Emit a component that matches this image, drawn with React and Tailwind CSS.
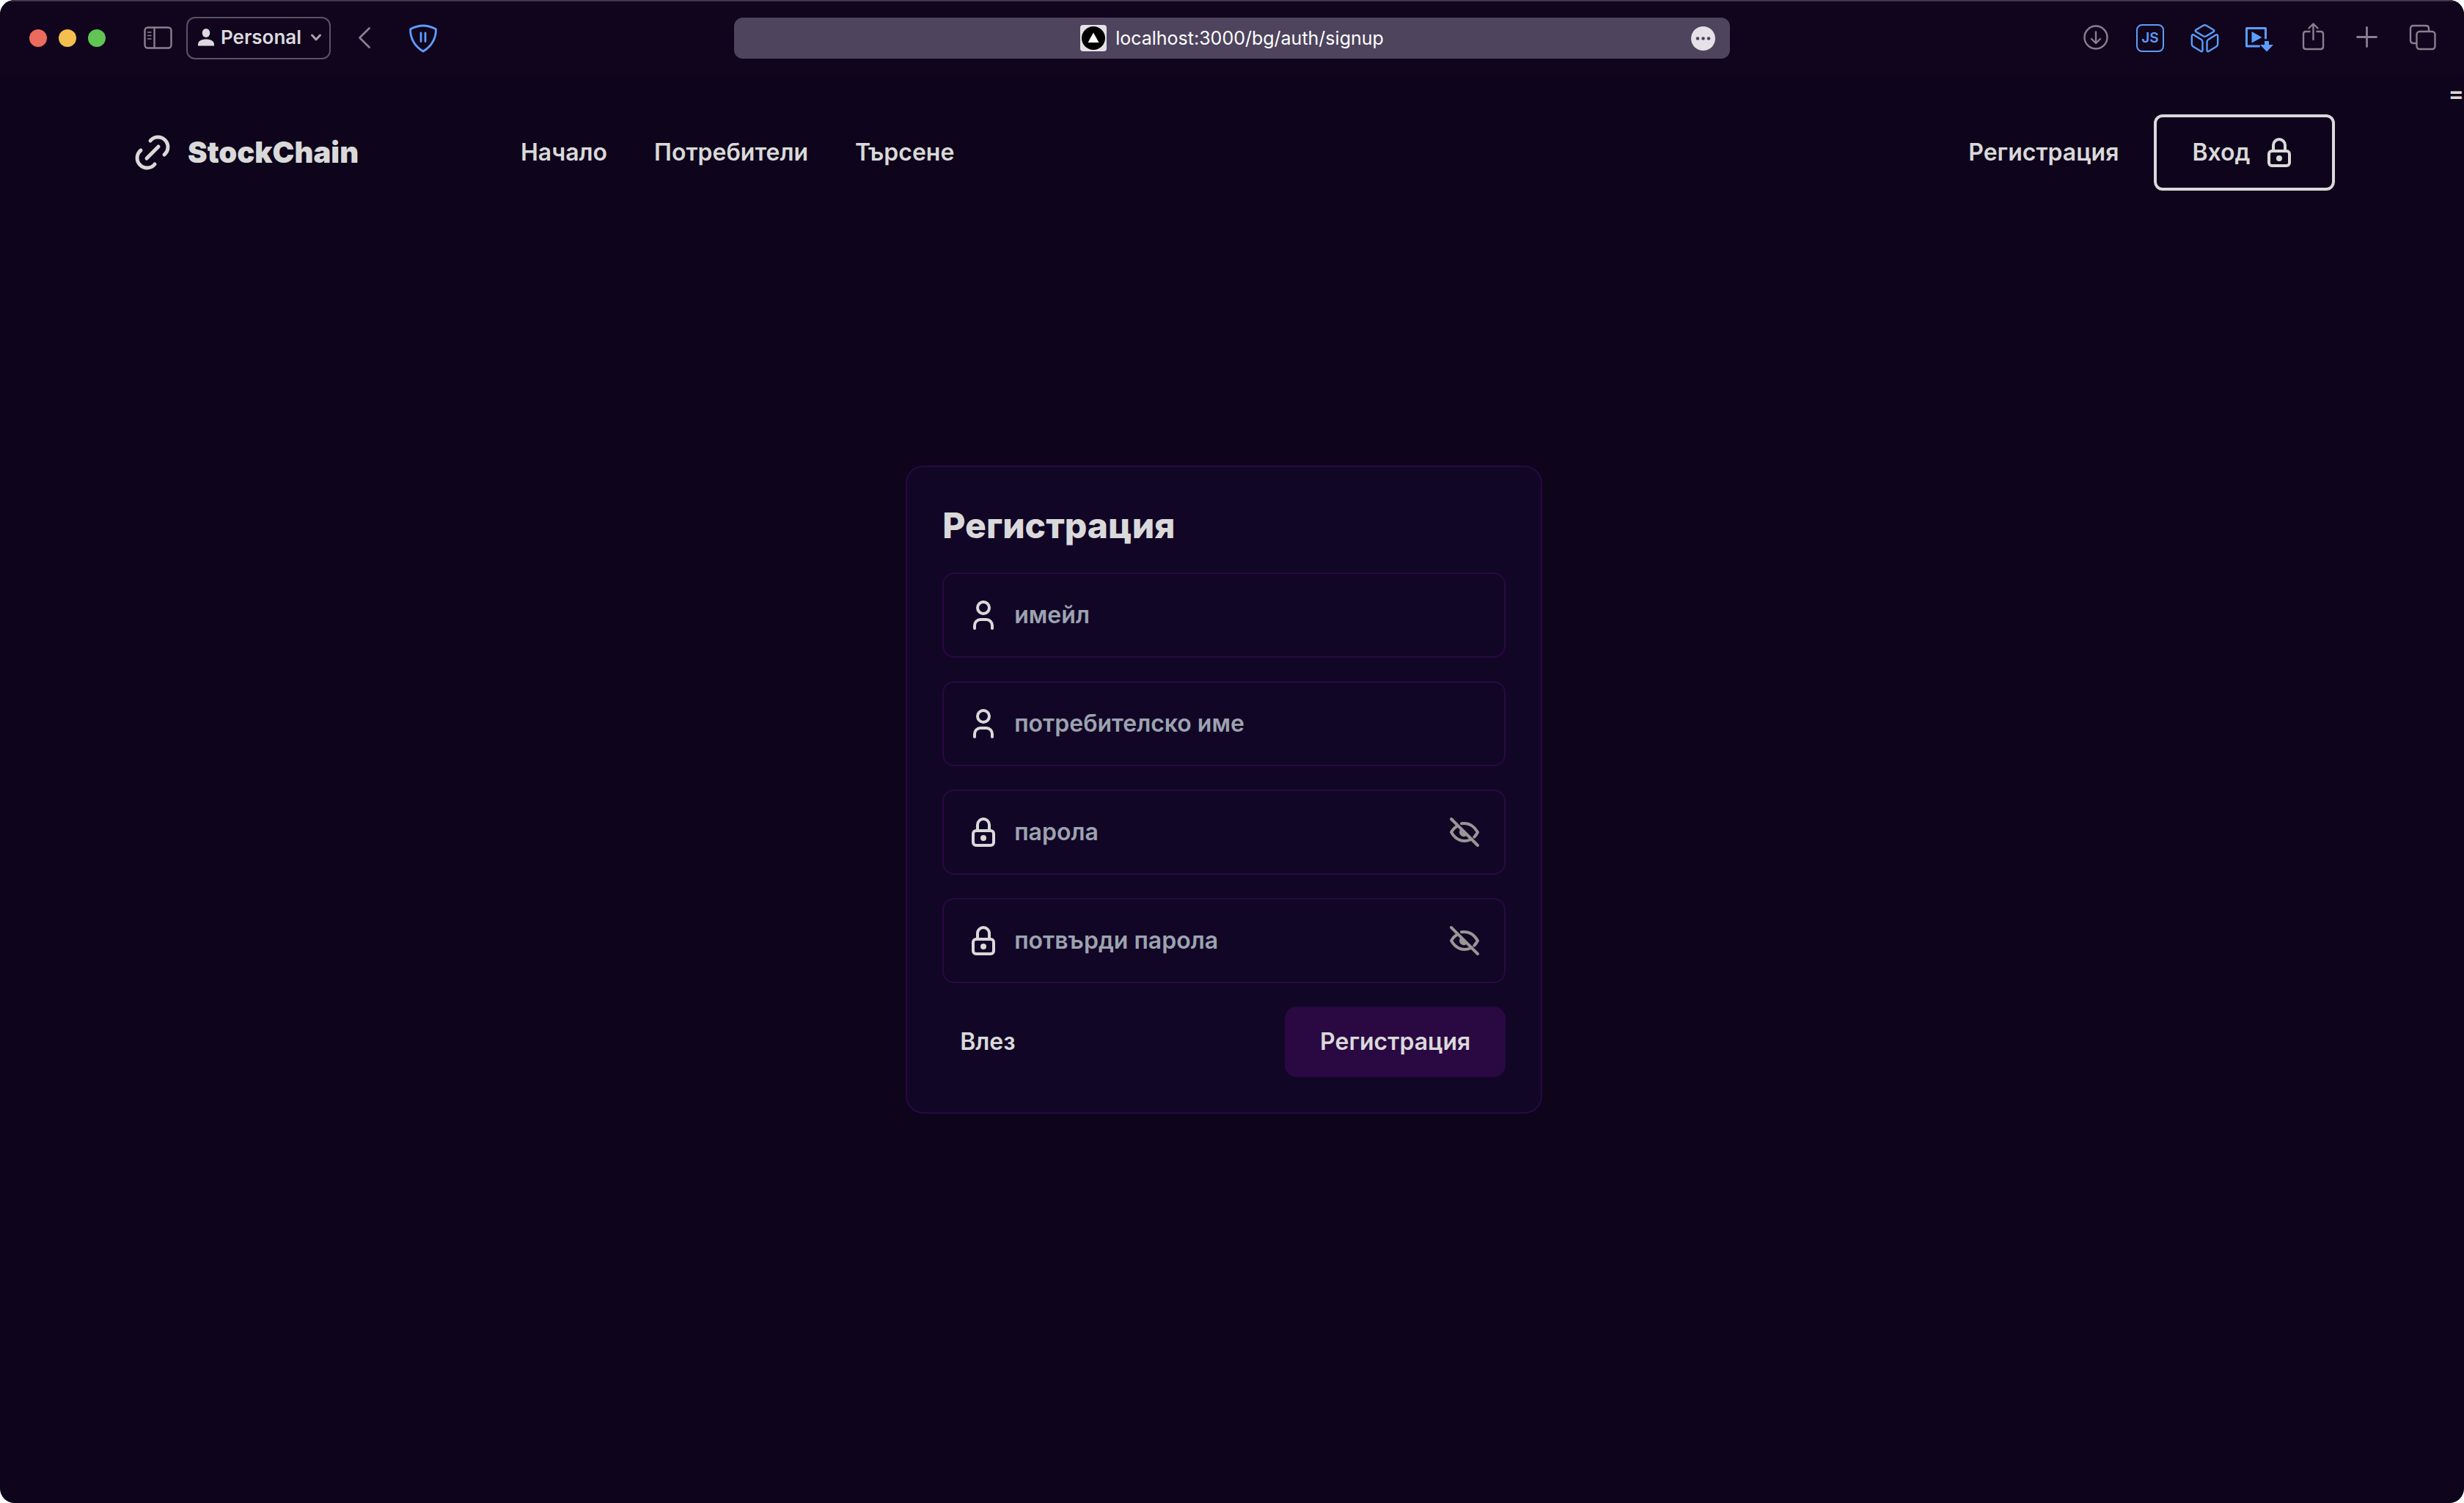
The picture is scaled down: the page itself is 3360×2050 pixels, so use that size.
import React from "react";

const stroke = {
  fill: "none",
  stroke: "currentColor",
  strokeLinecap: "round",
  strokeLinejoin: "round",
};

function ToolIcon({ children, width = 2.4 }) {
  return (
    <svg viewBox="0 0 44 44" className="size-11" {...stroke} strokeWidth={width} aria-hidden="true">
      {children}
    </svg>
  );
}

function ToolButton({ label, className = "text-[#88808f]", children }) {
  return (
    <button type="button" aria-label={label} className={`shrink-0 ${className}`}>
      {children}
    </button>
  );
}

function LinkLogo() {
  return (
    <svg viewBox="0 0 48 48" className="size-12" {...stroke} strokeWidth="5" aria-hidden="true">
      <path d="M21 8A13.5 13.5 0 1 1 40 27" />
      <path d="M27 40A13.5 13.5 0 1 1 8 21" />
      <path d="M16 32 32 16" />
    </svg>
  );
}

function UserIcon() {
  return (
    <svg viewBox="0 0 48 48" className="size-12 shrink-0" {...stroke} strokeWidth="4" aria-hidden="true">
      <circle cx="24" cy="14" r="8" />
      <path d="M12 42v-4a8 8 0 0 1 8-8h8a8 8 0 0 1 8 8v4" />
    </svg>
  );
}

function LockIcon() {
  return (
    <svg viewBox="0 0 48 48" className="size-12 shrink-0" {...stroke} strokeWidth="4" aria-hidden="true">
      <rect x="10" y="22" width="28" height="20" rx="4" />
      <path d="M16 22v-8a8 8 0 0 1 16 0v8" />
      <circle cx="24" cy="32" r="4" fill="currentColor" stroke="none" />
    </svg>
  );
}

function EyeOffIcon() {
  return (
    <svg viewBox="0 0 48 48" className="size-12" {...stroke} strokeWidth="4" aria-hidden="true">
      <path d="M6 6l36 36" />
      <path d="M20 12.2C29 10.800 36.500 14.500 42 24c-1.200 2.400-2.800 4.600-4.600 6.600" />
      <path d="M14 15.500C10.800 17.600 8.200 20.400 6 24c6.500 11.400 17 14.800 28 9.500" />
      <path d="M20.200 21.200a4 4 0 0 0 5.600 5.800z" fill="currentColor" />
    </svg>
  );
}

function Toolbar() {
  return (
    <div className="flex h-[104px] items-center border-t-2 border-[#3e3748] bg-[#10051c] px-9 pb-[2px]">
      <div className="flex flex-1 items-center">
        <div className="ml-1 flex gap-4">
          <button type="button" aria-label="Close" className="size-6 rounded-full bg-[#ed6a5e]" />
          <button type="button" aria-label="Minimize" className="size-6 rounded-full bg-[#f5bf4f]" />
          <button type="button" aria-label="Zoom" className="size-6 rounded-full bg-[#61c554]" />
        </div>
        <div className="ml-[50px] flex items-center gap-4">
          <ToolButton label="Sidebar">
            <ToolIcon>
              <rect x="3.500" y="7.500" width="36" height="28" rx="4" />
              <path d="M16.500 7.500v28" />
              <path d="M7.500 14h4.500M7.500 18.500h4.500M7.500 23h4.500" strokeWidth="1.500" />
            </ToolIcon>
          </ToolButton>
          <button
            type="button"
            className="flex h-[58px] w-[197px] items-center rounded-xl border-2 border-[#5b5364] pb-[2px] pl-[14px] pr-[10px] text-[#dcd9df]"
          >
            <svg viewBox="0 0 22 24" className="h-6 w-[22px]" fill="currentColor" aria-hidden="true">
              <ellipse cx="11" cy="6" rx="5.300" ry="6" />
              <path d="M0 23.500v-2C0 17 5 14.500 11 14.500S22 17 22 21.500v2z" />
            </svg>
            <span className="ml-[9px] text-[26px] leading-8 font-semibold">Personal</span>
            <svg viewBox="0 0 16 12" className="ml-auto h-3 w-4 text-[#aaa5a9]" {...stroke} strokeWidth="3" aria-hidden="true">
              <path d="M2.500 3 8 9l5.500-6" />
            </svg>
          </button>
        </div>
        <div className="ml-6 flex items-center gap-9">
          <ToolButton label="Back">
            <ToolIcon width={2.8}>
              <path d="M28.500 8.500 15.500 21.500l13 13" />
            </ToolIcon>
          </ToolButton>
          <ToolButton label="Content blocker" className="text-[#5c9dff]">
            <ToolIcon width={2.8}>
              <path d="M22 5c5.600 0 11.500 1.600 17.400 4.700C39.800 22 33.500 33.500 22 40 10.500 33.500 4.200 22 4.600 9.700 10.500 6.600 16.400 5 22 5z" />
              <path d="M19 15v11.500M25 15v11.500" />
            </ToolIcon>
          </ToolButton>
        </div>
      </div>

      <div className="flex h-14 w-[1358px] items-center rounded-xl bg-[#4e445d] pr-5">
        <span className="w-[53px]" />
        <div className="flex flex-1 items-center justify-center gap-3">
          <svg viewBox="0 0 36 36" className="size-9" aria-hidden="true">
            <rect width="36" height="36" rx="4" fill="#e4e2e7" />
            <circle cx="18" cy="18" r="16" fill="#000" />
            <path d="M18 10.500 25.500 24h-15z" fill="#fff" />
          </svg>
          <span className="text-[25px] leading-8 text-white">localhost:3000/bg/auth/signup</span>
        </div>
        <button type="button" aria-label="Page menu">
          <svg viewBox="0 0 33 33" className="size-[33px]" aria-hidden="true">
            <circle cx="16.500" cy="16.500" r="16.500" fill="#e4e2e7" />
            <g fill="#4e445d">
              <circle cx="9" cy="16.500" r="2.300" />
              <circle cx="16.500" cy="16.500" r="2.300" />
              <circle cx="24" cy="16.500" r="2.300" />
            </g>
          </svg>
        </button>
      </div>

      <div className="flex flex-1 items-center justify-end gap-[30px]">
        <ToolButton label="Downloads">
          <ToolIcon>
            <circle cx="22" cy="21" r="15.500" />
            <path d="M22 13.500v15M16 23l6 6 6-6" />
          </ToolIcon>
        </ToolButton>
        <ToolButton label="JavaScript" className="text-[#5c9dff]">
          <span className="flex size-11 items-center justify-center">
            <span className="flex size-[38px] items-center justify-center rounded-lg border-2 border-current text-[19px] leading-6 font-semibold">
              JS
            </span>
          </span>
        </ToolButton>
        <ToolButton label="Extension" className="text-[#5c9dff]">
          <ToolIcon>
            <path d="M20.500 4.800q2-1.100 4 0l10 6q1.600 1.200 0 2.400l-10 6q-2 1.100-4 0l-10-6q-1.600-1.200 0-2.400z" />
            <path d="M4.800 19.500q0-3.200 2.800-1.700l9.800 5.900q2.100 1.300 2.100 3.600v11q0 2.800-2.500 1.500l-10-6q-2.200-1.300-2.200-3.800z" />
            <path d="M40.200 19.500q0-3.200-2.800-1.700l-9.800 5.900q-2.100 1.300-2.100 3.600v11q0 2.800 2.500 1.500l10-6q2.200-1.300 2.200-3.800z" />
          </ToolIcon>
        </ToolButton>
        <ToolButton label="Video download" className="text-[#5c9dff]">
          <ToolIcon width={3}>
            <path d="M31.500 22V8.500h-26v24.500h17" />
            <path d="M12.500 13v15.500L26.500 21z" fill="currentColor" stroke="none" />
            <path d="M30 26h6v5h6l-9 9.500-9-9.500h6z" fill="currentColor" stroke="none" />
          </ToolIcon>
        </ToolButton>
        <ToolButton label="Share">
          <ToolIcon>
            <path d="M17.500 13h-5q-3.500 0-3.500 3.500v17q0 3.500 3.500 3.500h20q3.500 0 3.500-3.500v-17q0-3.500-3.500-3.500h-5" />
            <path d="M22.500 24V2.500M16.500 8.500l6-6 6 6" />
          </ToolIcon>
        </ToolButton>
        <ToolButton label="New tab">
          <ToolIcon width={2.8}>
            <path d="M21.500 7.500v26M8.500 20.500h26" />
          </ToolIcon>
        </ToolButton>
        <ToolButton label="Tabs">
          <ToolIcon>
            <rect x="15.500" y="13" width="25" height="24" rx="4" />
            <path d="M15 29h-4q-4 0-4-4V9q0-4 4-4h17q4 0 4 4v4" />
          </ToolIcon>
        </ToolButton>
      </div>
    </div>
  );
}

function Header() {
  return (
    <header className="flex items-center self-start pt-[52px] pr-[154px] pl-[184px]">
      <div className="flex w-[526px]">
        <a href="#home" className="flex items-center gap-6">
          <LinkLogo />
          <span className="text-[40px] leading-[56px] font-black">StockChain</span>
        </a>
      </div>
      <nav className="flex gap-16 text-[32px] leading-[48px] font-semibold">
        <a href="#start">Начало</a>
        <a href="#users">Потребители</a>
        <a href="#search">Търсене</a>
      </nav>
      <div className="ml-auto flex items-center gap-12 text-[32px] leading-[48px] font-semibold">
        <a href="#signup">Регистрация</a>
        <button type="button" className="flex h-[104px] items-center gap-4 rounded-xl border-4 border-[#d9d9d9] px-12">
          Вход
          <LockIcon />
        </button>
      </div>
    </header>
  );
}

function Field({ id, label, type = "text", icon, reveal }) {
  return (
    <div className="flex h-[116px] items-center gap-4 rounded-2xl border-2 border-[#2a0842] px-[30px]">
      <label htmlFor={id} aria-label={label}>
        {icon}
      </label>
      <input
        id={id}
        type={type}
        placeholder={label}
        className="min-w-0 flex-1 bg-transparent px-[2px] text-[32px] leading-[48px] font-semibold outline-none placeholder:text-[#9ca3af]"
      />
      {reveal && (
        <button type="button" aria-label="Покажи" className="text-[#999694]">
          <EyeOffIcon />
        </button>
      )}
    </div>
  );
}

function SignupCard() {
  return (
    <form className="flex w-[868px] flex-col gap-8 justify-self-center rounded-3xl border-2 border-[#2a0842] bg-[#120627] p-12">
      <h1 className="text-[48px] leading-[64px] font-extrabold">Регистрация</h1>
      <Field id="email" label="имейл" icon={<UserIcon />} />
      <Field id="username" label="потребителско име" icon={<UserIcon />} />
      <Field id="password" label="парола" type="password" icon={<LockIcon />} reveal />
      <Field id="confirm" label="потвърди парола" type="password" icon={<LockIcon />} reveal />
      <div className="flex items-center justify-between text-[32px] leading-[48px] font-semibold">
        <a href="#login" className="px-6">
          Влез
        </a>
        <button type="submit" className="h-24 rounded-2xl bg-[#2a0842] px-12">
          Регистрация
        </button>
      </div>
    </form>
  );
}

export default function App() {
  return (
    <div className="min-h-screen bg-white font-[Inter,sans-serif]">
      <div className="flex min-h-screen flex-col overflow-hidden rounded-[20px] bg-[#0e041b] text-[#d9d9d9]">
        <Toolbar />
        <div className="flex flex-1">
          <main className="grid flex-1 grid-rows-[1fr_auto_1fr]">
            <Header />
            <SignupCard />
          </main>
          <span className="text-[32px] leading-[48px] font-semibold">=</span>
        </div>
      </div>
    </div>
  );
}
